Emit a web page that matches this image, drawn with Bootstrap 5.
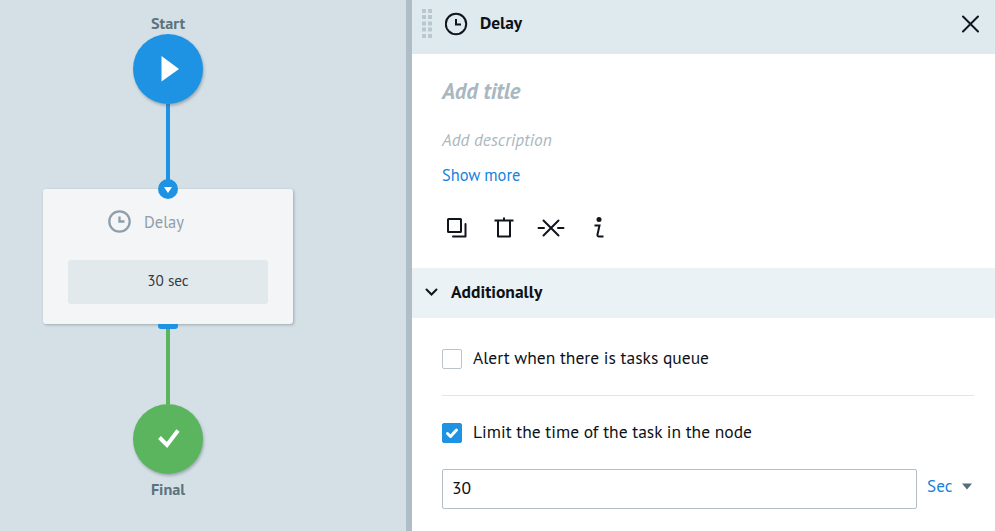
<!DOCTYPE html>
<html lang="en">
<head>
<meta charset="utf-8">
<meta name="viewport" content="width=device-width, initial-scale=1">
<title>Delay node</title>
<link href="https://cdn.jsdelivr.net/npm/bootstrap@5.3.0/dist/css/bootstrap.min.css" rel="stylesheet">
<style>
body{font-family:"PT Sans","Noto Sans",sans-serif;color:#0d1118;background:#fff;line-height:20px}
svg{display:block;flex:none}
.canvas{width:412px;background:#d5e0e6;border-right:6px solid #aebdc6;padding-right:70px}
.node-label{font-size:16.2px;font-weight:700;color:#5c737d;height:20px;line-height:20px}
.start-label{margin-top:13px;margin-bottom:1px}
.final-label{margin-top:5px}
.disc{width:70px;height:70px;box-shadow:1px 2px 3px rgba(70,90,100,.4);z-index:1}
.disc-start{background:#1e93e4}
.disc-final{background:#5bb55e}
.link-in{width:4px;height:85px;background:#1e93e4}
.link-out{width:4px;height:75px;background:#5bb55e}
.node-card{width:250px;height:135px;background:#f3f5f7;box-shadow:1px 1px 3px rgba(70,90,100,.4);border-radius:3px;padding:23px 25px 20px}
.port{width:20px;height:20px;background:#1e93e4;top:-10px;left:115px}
.port-out{width:20px;height:5px;background:#1e93e4;border-radius:0 0 3px 3px;z-index:1}
.node-head{height:20px;margin-left:39px;gap:12px;color:#8e9eaa;font-size:16.5px}
.node-value{height:44px;margin-top:28px;background:#e2e9ec;border-radius:3px;color:#333c45;font-size:15.2px;padding-bottom:2px}
.panel-head{height:54px;background:#dfeaef;padding:0 14px 7px 9px}
.panel-name{font-size:17.4px;font-weight:700;margin:-2px 0 0 11px}
.panel-main{height:214px;padding:26px 30px 0}
.title-hint{font-size:22.6px;line-height:22px;font-weight:700;font-style:italic;color:#a9b8c0}
.desc-hint{font-size:17.4px;font-style:italic;color:#a9b8c0;margin-top:28px}
.more{margin-top:15px;font-size:16.4px}
.panel-main a,.unit{color:#1682dc}
.tools{margin:32px 0 0 4px;gap:26px}
.tools svg:nth-child(3){margin-left:-3px}
.section-head{height:50px;background:#eaf2f6;padding:0 12px 2px;font-size:17.5px;font-weight:700;gap:13px}
.options{padding:29px 21px 0 30px}
.option{height:22px;font-size:17.5px}
.option span{margin-top:-1px}
.form-check-input.box{width:20px;height:20px;border:1px solid #b9c4ca;border-radius:2px;margin:2px 11px 0 0;flex:none}
.form-check-input.box:checked{background-color:#1e93e4;border-color:#1e93e4;background-image:none}
.tick{left:3px;top:5px;pointer-events:none}
.rule{height:1px;background:#dde6e9;margin:26px 0 25px}
.time{margin-top:26px}
.form-control.amount{width:475px;height:40px;border:1px solid #b3bfc5;border-radius:2px;padding:0 9px 3px;font-size:17.5px;color:#0d1118}
.unit{margin:-6px 0 0 10px;gap:10px;font-size:17.2px}
</style>
</head>
<body>
<div class="d-flex vh-100 overflow-hidden">
  <section class="canvas d-flex flex-column align-items-center flex-shrink-0">
    <div class="node-label start-label">Start</div>
    <div class="disc disc-start rounded-circle flex-shrink-0 d-flex align-items-center justify-content-center">
      <svg width="70" height="70"><path d="M28.500 22v25.500l17.500-12.500z" fill="#fff"/></svg>
    </div>
    <div class="link-in flex-shrink-0"></div>
    <div class="node-card position-relative flex-shrink-0">
      <div class="port rounded-circle position-absolute"><svg width="20" height="20"><path d="M6 8h8l-4 6z" fill="#fff"/></svg></div>
      <div class="node-head d-flex align-items-center">
        <svg width="25" height="25" fill="none" stroke="#8e9eaa" stroke-width="2.300"><circle cx="12.500" cy="11.500" r="10.200"/><path d="M12.500 6.500v5h5"/></svg>
        <span>Delay</span>
      </div>
      <div class="node-value d-flex align-items-center justify-content-center">30 sec</div>
    </div>
    <div class="port-out flex-shrink-0"></div>
    <div class="link-out flex-shrink-0"></div>
    <div class="disc disc-final rounded-circle flex-shrink-0">
      <svg width="70" height="70"><path d="M26.500 33.500l7.500 7.500 11-14.500" fill="none" stroke="#fff" stroke-width="4"/></svg>
    </div>
    <div class="node-label final-label">Final</div>
  </section>

  <aside class="flex-grow-1">
    <header class="panel-head d-flex align-items-center">
      <svg width="12" height="30" viewBox="0 0 12 30" fill="#bac8ce"><path d="M1 0h4v4H1zM7 0h4v4H7zM1 6h4v4H1zM7 6h4v4H7zM1 12.500h4v4H1zM7 12.500h4v4H7zM1 18.500h4v4H1zM7 18.500h4v4H7zM1 25h4v4H1zM7 25h4v4H7z"/></svg>
      <svg class="ms-2 ps-1" width="28" height="24" viewBox="0 0 24 24" fill="none" stroke="#10151d" stroke-width="2"><circle cx="11" cy="12" r="10.200"/><path d="M11 7v5.500h5"/></svg>
      <span class="panel-name">Delay</span>
      <svg class="ms-auto" width="20" height="20" fill="none" stroke="#10151d" stroke-width="2" stroke-linecap="round"><path d="M2 2.500l15 15M17 2.500l-15 15"/></svg>
    </header>
    <div class="panel-main">
      <div class="title-hint">Add title</div>
      <div class="desc-hint">Add description</div>
      <div class="more"><a href="#" class="text-decoration-none">Show more</a></div>
      <div class="tools d-flex align-items-center">
        <svg width="22" height="22" fill="none" stroke="#10151d" stroke-width="2" stroke-linejoin="round" stroke-linecap="round"><rect x="2" y="2" width="13" height="13" rx=".5"/><path d="M19.500 7v12.500H7"/></svg>
        <svg width="20" height="22" fill="none" stroke="#10151d" stroke-width="2" stroke-linejoin="round"><path d="M.5 3.500h19M4 3.500v16h12v-16M10 .5v3"/></svg>
        <svg width="28" height="22" fill="none" stroke="#10151d" stroke-width="2" stroke-linecap="round"><path d="M1.500 11h5.500M21 11h5.500"/><path d="M6.500 3.500l15 15M21.500 3.500l-15 15"/></svg>
        <svg width="14" height="22" fill="none" stroke="#10151d" stroke-width="2"><circle cx="8" cy="2.500" r="2.500" fill="#10151d" stroke="none"/><path d="M3.500 8.500h5L6.500 17.500c-.3 1.600.5 2 1.500 2H12.500"/></svg>
      </div>
    </div>
    <div class="section-head d-flex align-items-center">
      <svg width="14" height="10" fill="none" stroke="#10151d" stroke-width="2" stroke-linecap="round"><path d="M2.500 2.500l5 5 5-5"/></svg>
      <span>Additionally</span>
    </div>
    <div class="options">
      <label class="option d-flex align-items-center"><input class="form-check-input box" type="checkbox"><span>Alert when there is tasks queue</span></label>
      <div class="rule"></div>
      <label class="option d-flex align-items-center position-relative"><input class="form-check-input box" type="checkbox" checked>
        <svg class="tick position-absolute" width="14" height="14" fill="none" stroke="#fff" stroke-width="3" stroke-linecap="round" stroke-linejoin="round"><path d="M2.500 7.500l3 3 6-6.500"/></svg>
        <span>Limit the time of the task in the node</span></label>
      <div class="time d-flex align-items-center">
        <input class="form-control amount" type="text" value="30" aria-label="Time limit">
        <div class="unit d-flex align-items-center"><span>Sec</span><svg width="10" height="7"><path d="M0 .5h10L5 6.500z" fill="#546e7a"/></svg></div>
      </div>
    </div>
  </aside>
</div>
<script src="https://cdn.jsdelivr.net/npm/bootstrap@5.3.0/dist/js/bootstrap.bundle.min.js"></script>
</body>
</html>
